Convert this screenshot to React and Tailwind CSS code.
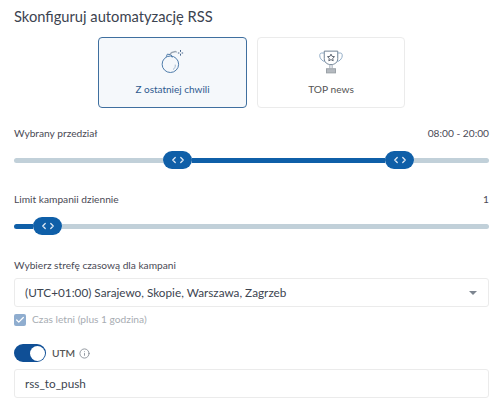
import React from "react";
import { ChevronLeft, ChevronRight, Check, Info } from "lucide-react";

const Thumb = () => (
  <div className="w-[29px] h-[18px] shrink-0 rounded-full bg-[#0f5fa8] flex items-center justify-center text-[#dfe9f4]">
    <ChevronLeft className="w-[10px] h-[10px]" strokeWidth={3} />
    <ChevronRight className="w-[10px] h-[10px] -ml-[2px]" strokeWidth={3} />
  </div>
);

const Grey = ({ className }) => <div className={`h-[5px] bg-[#c1d0d9] ${className}`} />;
const Blue = ({ className }) => <div className={`h-[5px] bg-[#0f5fa8] ${className}`} />;

const BombIcon = () => (
  <svg width="24" height="24" viewBox="0 0 32 32" fill="none" stroke="#4a78a8" strokeWidth="1.300">
    <circle cx="12.500" cy="19" r="11" />
    <path d="M19 19.500c.5 3-1 5.500-3 6.500" stroke="#9db4cc" />
    <path d="M7 9l1.500-3.500 5 1 1.500 3.500" />
    <path d="M12 6l2-2.500 5-1.500 2 1" stroke="#9aa5b1" strokeWidth="1.800" />
    <path d="M26 0v2.500M26 5v2.500M22.500 4h2M27.500 4h2" stroke="#3f5f86" />
  </svg>
);

const TrophyIcon = () => (
  <svg width="24" height="24" viewBox="0 0 32 32" fill="none" stroke="#6d7f92" strokeWidth="1.300">
    <path d="M7 1.500h18v10c0 5-4 8-9 8s-9-3-9-8z" />
    <path d="M7 4H3.500C1 4 .5 7 1.500 10c1 2.500 3 4.500 6 5.500" stroke="#8ea9c4" />
    <path d="M25 4h3.500c2.500 0 3 3 2 6-1 2.500-3 4.500-6 5.500" stroke="#8ea9c4" />
    <path d="M16 5.500l1.400 3 3.300.4-2.400 2.200.6 3.300-2.900-1.600-2.900 1.600.6-3.300-2.400-2.200 3.300-.4z" stroke="#5b6470" />
    <path d="M14.500 19.500v5M17.500 19.500v5" stroke="#9aa5b1" />
    <rect x="10" y="25" width="12" height="5.500" fill="#b4b9bf" stroke="#9aa0a6" />
  </svg>
);

export default function App() {
  return (
    <div className="w-[500px] h-[402px] overflow-hidden bg-white px-[14px] pt-[6px] font-['Lato','Noto_Sans',sans-serif] text-[#4a4a55]">
      <h1 className="text-[14.700px] leading-[20px] text-[#3c4450]">Skonfiguruj automatyzację RSS</h1>

      {/* Cards */}
      <div className="flex gap-[10px] mt-[11px] ml-[84px]">
        <button className="w-[149px] h-[71px] rounded-[4px] border border-[#3f6f9f] bg-[#f5f8fb] flex flex-col items-center pt-[12px]">
          <BombIcon />
          <span className="text-[10px] leading-[14px] mt-[8px] text-[#2f5a8f]">Z ostatniej chwili</span>
        </button>
        <button className="w-[148px] h-[71px] rounded-[4px] border border-[#ebebeb] bg-white flex flex-col items-center pt-[12px]">
          <TrophyIcon />
          <span className="text-[10.200px] leading-[14px] mt-[8px] text-[#555]">TOP news</span>
        </button>
      </div>

      {/* Range slider */}
      <div className="flex justify-between w-[475px] mt-[19px] text-[10.200px] leading-[13px]">
        <span>Wybrany przedział</span>
        <span>08:00 - 20:00</span>
      </div>
      <div className="flex items-center w-[475px] mt-[11px]">
        <Grey className="w-[149px] rounded-l-full" />
        <Thumb />
        <Blue className="flex-1" />
        <Thumb />
        <Grey className="w-[75px] rounded-r-full" />
      </div>

      {/* Limit slider */}
      <div className="flex justify-between w-[475px] mt-[24px] text-[10.200px] leading-[13px]">
        <span>Limit kampanii dziennie</span>
        <span>1</span>
      </div>
      <div className="flex items-center w-[475px] mt-[11px]">
        <Blue className="w-[19px] rounded-l-full" />
        <Thumb />
        <Grey className="flex-1 rounded-r-full" />
      </div>

      {/* Timezone */}
      <div className="text-[10.200px] leading-[13px] mt-[24px]">Wybierz strefę czasową dla kampani</div>
      <div className="flex items-center justify-between w-[475px] h-[29px] mt-[6px] px-[10px] rounded-[3px] border border-[#ebebeb] text-[11.750px] text-[#3c4450]">
        <span>(UTC+01:00) Sarajewo, Skopie, Warszawa, Zagrzeb</span>
        <div className="w-0 h-0 mr-[1px] border-x-[4px] border-x-transparent border-t-[4px] border-t-[#7d8590]" />
      </div>
      <div className="flex items-center gap-[6px] mt-[6px]">
        <div className="w-[12px] h-[12px] rounded-[2px] bg-[#8fadcf] flex items-center justify-center">
          <Check className="w-[10px] h-[10px] text-white" strokeWidth={3} />
        </div>
        <span className="text-[10.200px] leading-[13px] text-[#a8adb3]">Czas letni (plus 1 godzina)</span>
      </div>

      {/* UTM */}
      <div className="flex items-center mt-[18px]">
        <div className="w-[32px] h-[18px] rounded-full bg-[#0f4f96] flex items-center justify-end pr-[1px]">
          <div className="w-[15px] h-[15px] rounded-full bg-white" />
        </div>
        <span className="ml-[6px] text-[10.200px] leading-[18px] font-semibold text-[#555]">UTM</span>
        <Info className="ml-[4px] w-[11px] h-[11px] text-[#8a9099]" />
      </div>
      <div className="flex items-center w-[475px] h-[29px] mt-[7px] px-[10px] rounded-[3px] border border-[#ebebeb] text-[11.750px] text-[#3c4450]">
        rss_to_push
      </div>
    </div>
  );
}
